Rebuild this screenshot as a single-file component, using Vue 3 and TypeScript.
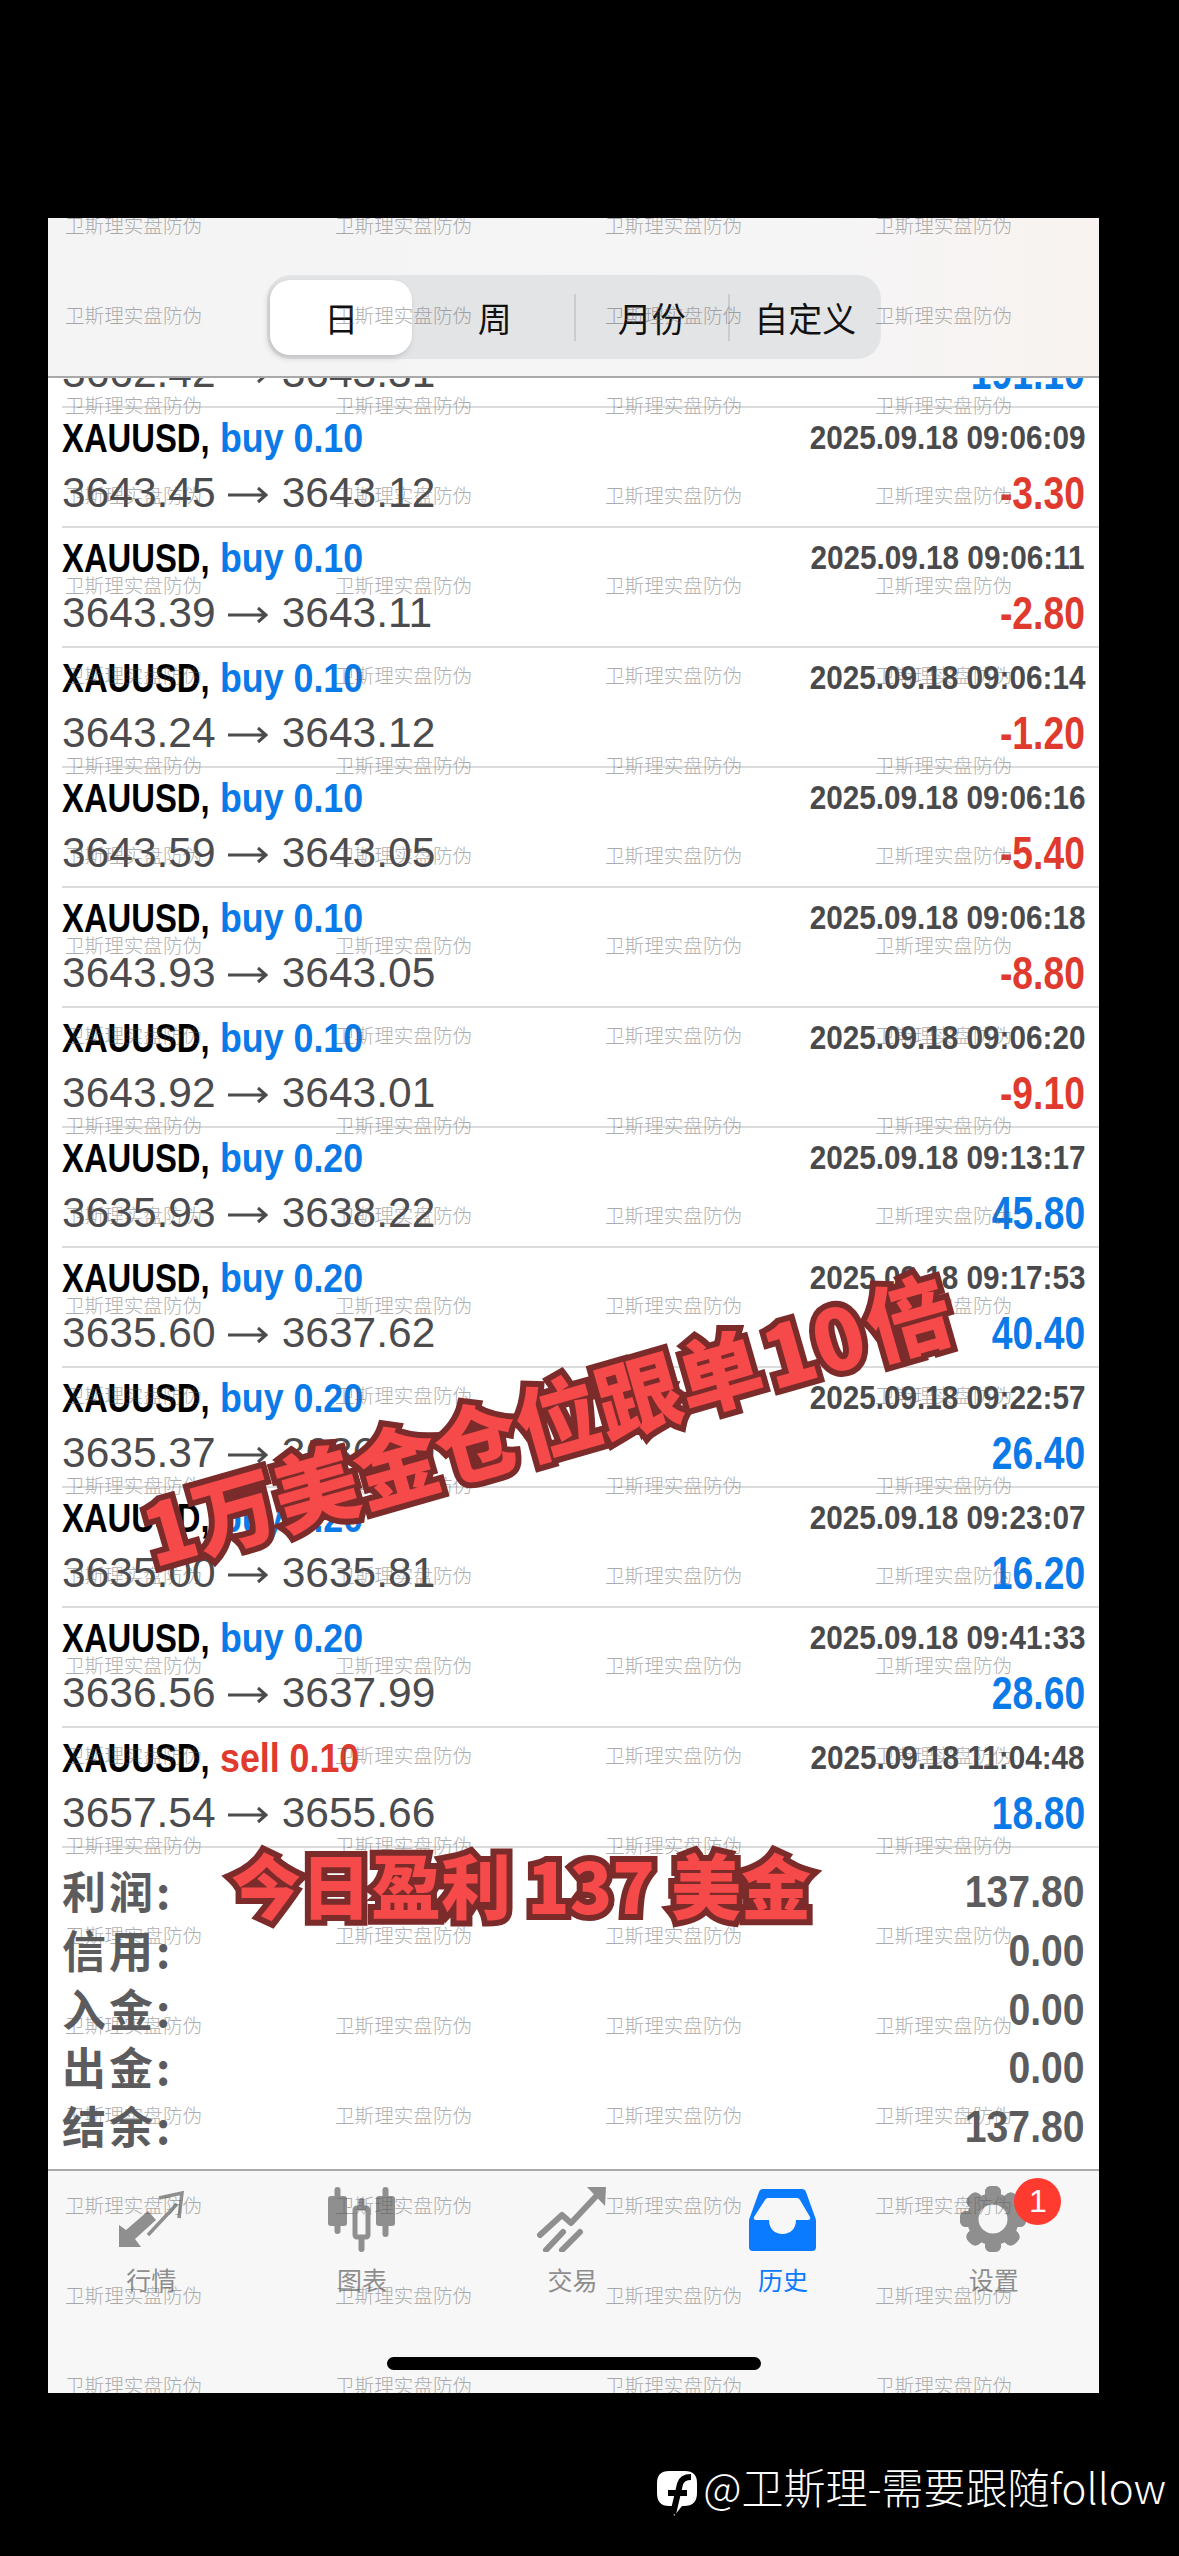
<script setup lang="ts">
interface Trade { side: string; lot: string; open: string; close: string; time: string; amount: string }

const trades: Trade[] = [
  { side: 'sell', lot: '0.10', open: '3662.42', close: '3643.31', time: '2025.09.18 08:59:02', amount: '191.10' },
  { side: 'buy', lot: '0.10', open: '3643.45', close: '3643.12', time: '2025.09.18 09:06:09', amount: '-3.30' },
  { side: 'buy', lot: '0.10', open: '3643.39', close: '3643.11', time: '2025.09.18 09:06:11', amount: '-2.80' },
  { side: 'buy', lot: '0.10', open: '3643.24', close: '3643.12', time: '2025.09.18 09:06:14', amount: '-1.20' },
  { side: 'buy', lot: '0.10', open: '3643.59', close: '3643.05', time: '2025.09.18 09:06:16', amount: '-5.40' },
  { side: 'buy', lot: '0.10', open: '3643.93', close: '3643.05', time: '2025.09.18 09:06:18', amount: '-8.80' },
  { side: 'buy', lot: '0.10', open: '3643.92', close: '3643.01', time: '2025.09.18 09:06:20', amount: '-9.10' },
  { side: 'buy', lot: '0.20', open: '3635.93', close: '3638.22', time: '2025.09.18 09:13:17', amount: '45.80' },
  { side: 'buy', lot: '0.20', open: '3635.60', close: '3637.62', time: '2025.09.18 09:17:53', amount: '40.40' },
  { side: 'buy', lot: '0.20', open: '3635.37', close: '3636.69', time: '2025.09.18 09:22:57', amount: '26.40' },
  { side: 'buy', lot: '0.20', open: '3635.00', close: '3635.81', time: '2025.09.18 09:23:07', amount: '16.20' },
  { side: 'buy', lot: '0.20', open: '3636.56', close: '3637.99', time: '2025.09.18 09:41:33', amount: '28.60' },
  { side: 'sell', lot: '0.10', open: '3657.54', close: '3655.66', time: '2025.09.18 11:04:48', amount: '18.80' },
]

const summary = [
  { label: '利润:', value: '137.80' },
  { label: '信用:', value: '0.00' },
  { label: '入金:', value: '0.00' },
  { label: '出金:', value: '0.00' },
  { label: '结余:', value: '137.80' },
]

const segments = ['日', '周', '月份', '自定义']
const gearTeeth = [0, 45, 90, 135, 180, 225, 270, 315]
const marks = Array.from({ length: 100 }, (_, i) => i)
</script>

<template>
  <div class="page">
    <div class="screen">
      <header class="head">
        <div class="seg">
          <div v-for="(s, i) in segments" :key="s" class="seg-item" :class="{ active: i === 0, divided: i > 1 }">
            <span class="seg-text">{{ s }}</span>
          </div>
        </div>
      </header>

      <main class="main">
        <div class="list">
          <div v-for="t in trades" :key="t.time" class="row">
            <div class="line one">
              <div class="title">
                <span class="sym">XAUUSD,</span>
                <span class="lot" :class="t.side">{{ t.side }} {{ t.lot }}</span>
              </div>
              <span class="time">{{ t.time }}</span>
            </div>
            <div class="line two">
              <span class="price">
                <span>{{ t.open }}</span>
                <svg class="arrow" viewBox="0 0 40 20" width="40" height="20">
                  <path fill="none" stroke="#4c4c4e" stroke-width="3" d="M0 10 H38 M30 3 L38 10 L30 17" />
                </svg>
                <span>{{ t.close }}</span>
              </span>
              <span class="amount" :class="t.amount.startsWith('-') ? 'neg' : 'pos'">{{ t.amount }}</span>
            </div>
          </div>
        </div>
        <div class="summary">
          <div v-for="s in summary" :key="s.label" class="sum-row">
            <span class="sum-label">{{ s.label }}</span>
            <span class="sum-value">{{ s.value }}</span>
          </div>
        </div>
      </main>

      <nav class="tabbar">
        <div class="tabs">
          <div class="tab">
            <svg class="icon" viewBox="0 0 80 66" width="80" height="66">
              <path fill="#8f8f8f" d="M8 39 L15 44 L37 25 L45 34 L24 53 L30 61 L8 61 Z" />
              <path fill="none" stroke="#8f8f8f" stroke-width="3.5" d="M37 49 L66 18 M48 12 L71 7 L68 32" />
            </svg>
            <span class="tab-label">行情</span>
          </div>
          <div class="tab">
            <svg class="icon" viewBox="0 0 80 66" width="80" height="66">
              <g fill="#8f8f8f">
                <rect x="12.5" y="1" width="6" height="47" rx="3" />
                <rect x="6" y="10" width="19" height="30" rx="3" />
                <rect x="60.5" y="1" width="6" height="50" rx="3" />
                <rect x="54" y="10" width="19" height="30" rx="3" />
                <rect x="36.5" y="12" width="6" height="54" rx="3" />
              </g>
              <rect x="33" y="22" width="13" height="29" rx="2" fill="#f7f7f7" stroke="#8f8f8f" stroke-width="5" />
            </svg>
            <span class="tab-label">图表</span>
          </div>
          <div class="tab">
            <svg class="icon" viewBox="0 0 80 66" width="80" height="66">
              <g fill="none" stroke="#8f8f8f" stroke-width="6" stroke-linecap="round" stroke-linejoin="round">
                <path d="M8 49 L30 29 L39 37 L69 5" />
                <path d="M14 64 L31 46 M30 64 L48 46" />
              </g>
              <path fill="#8f8f8f" d="M55 1 L74 1 L73 20 Z" />
            </svg>
            <span class="tab-label">交易</span>
          </div>
          <div class="tab">
            <svg class="icon" viewBox="0 0 80 66" width="80" height="66">
              <path fill="#0a7aff" d="M20 3 H59 Q62 3 63 6 L72 31 Q73 33 73 35 V61 Q73 65 69 65 H10 Q6 65 6 61 V35 Q6 33 7 31 L16 6 Q17 3 20 3 Z" />
              <path fill="#f7f7f7" d="M25 12 H54 Q56 12 57 14 L67 31 Q68 34 65 34 H53 C53 43 47 48 39.5 48 C32 48 26 43 26 34 H13 Q10 34 11 31 L22 14 Q23 12 25 12 Z" />
            </svg>
            <span class="tab-label current">历史</span>
          </div>
          <div class="tab">
            <svg class="icon" viewBox="0 0 80 66" width="80" height="66">
              <g fill="#8f8f8f">
                <rect v-for="a in gearTeeth" :key="a" x="31" y="0" width="16" height="66" rx="6" :transform="`rotate(${a} 39 33)`" />
              </g>
              <circle cx="39" cy="33" r="20" fill="none" stroke="#8f8f8f" stroke-width="12" />
              <circle cx="39" cy="33" r="14.5" fill="#f7f7f7" />
            </svg>
            <span class="tab-label">设置</span>
            <span class="badge">1</span>
          </div>
        </div>
        <div class="home"></div>
      </nav>

      <div class="marks">
        <span v-for="m in marks" :key="m" class="mark">卫斯理实盘防伪</span>
      </div>
      <div class="sticker big">1万美金仓位跟单 10 倍</div>
      <div class="sticker small">今日盈利 137 美金</div>
    </div>

    <footer class="foot">
      <svg class="fb" viewBox="0 0 40 46" width="40" height="46">
        <path fill="#fff" d="M12 1 H28 Q40 1 40 13 V23 Q40 36 27 36 H25 L17 46 L15 36 H12 Q0 36 0 23 V13 Q0 1 12 1 Z" />
        <path fill="none" stroke="#000" stroke-width="6" d="M16 44 L23 14 Q25 7 34 7 M11 23 H30" />
      </svg>
      <span class="foot-text">@卫斯理-需要跟随follow</span>
    </footer>
  </div>
</template>

<style>
html, body { margin: 0; background: #000; }
</style>

<style scoped>
.page {
  width: 1179px;
  height: 2556px;
  box-sizing: border-box;
  padding: 218px 0 0 48px;
  background: #000;
  display: flex;
  flex-direction: column;
  font-family: "Liberation Sans", "Noto Sans CJK SC", sans-serif;
  overflow: hidden;
}
.screen {
  position: relative;
  width: 1051px;
  height: 2175px;
  flex: none;
  overflow: hidden;
  background: #fff;
  display: flex;
  flex-direction: column;
}
.head {
  height: 160px;
  flex: none;
  box-sizing: border-box;
  border-bottom: 2px solid #a9a9a9;
  background: linear-gradient(90deg, #f4f4f5 0%, #f5f5f6 70%, #f8f3f0 100%);
  padding: 57px 0 0 219px;
}
.seg {
  width: 614px;
  height: 84px;
  border-radius: 24px;
  background: #e3e4e6;
  display: grid;
  grid-template-columns: repeat(4, 1fr);
  align-items: center;
}
.seg-item {
  position: relative;
  height: 47px;
  display: flex;
  align-items: center;
  justify-content: center;
  font: 400 34px/47px "Noto Sans CJK SC", sans-serif;
  color: #111;
}
.seg-text { position: relative; }
.seg-item:nth-child(-n+2) .seg-text { margin-right: 5px; }
.seg-item.divided { border-left: 2px solid #cbccce; box-sizing: border-box; }
.seg-item.active::before {
  content: "";
  position: absolute;
  left: 3px;
  top: -14px;
  width: 142px;
  height: 75px;
  border-radius: 20px;
  background: #fff;
  box-shadow: -2px 3px 6px rgba(0, 0, 0, 0.16);
}
.main {
  flex: 1;
  min-height: 0;
  display: flex;
  flex-direction: column;
  overflow: hidden;
}
.list { margin-top: -90px; padding-left: 14px; }
.row {
  height: 120px;
  box-sizing: border-box;
  border-bottom: 2px solid #dcdcdc;
  padding: 6px 14px 0 0;
}
.line {
  display: flex;
  justify-content: space-between;
  white-space: nowrap;
}
.one { height: 48px; line-height: 48px; }
.two { height: 50px; line-height: 50px; margin-top: 6px; }
.title { display: flex; }
.sym {
  display: inline-block;
  width: 158px;
  font-size: 41px;
  font-weight: 700;
  color: #000;
  transform: scaleX(0.8);
  transform-origin: left center;
}
.lot {
  display: inline-block;
  font-size: 41px;
  font-weight: 700;
  transform: scaleX(0.872);
  transform-origin: left center;
}
.lot.buy { color: #0a7ae8; }
.lot.sell { color: #e03a2e; }
.time {
  font-size: 33px;
  font-weight: 700;
  color: #4a4a4c;
  transform: scaleX(0.9);
  transform-origin: right center;
}
.price {
  display: flex;
  align-items: center;
  font-size: 42.5px;
  color: #4c4c4e;
}
.arrow { margin: 0 14px 0 12px; flex: none; position: relative; top: 2px; }
.amount {
  font-size: 46px;
  font-weight: 700;
  transform: scaleX(0.81);
  transform-origin: right center;
}
.amount.neg { color: #e03a2e; }
.amount.pos { color: #0a7ae8; }
.summary {
  flex: 1;
  padding: 13px 14px 0;
}
.sum-row {
  height: 58.7px;
  display: flex;
  align-items: center;
  justify-content: space-between;
  color: #5c5c5e;
}
.sum-label {
  font: 700 44px/58px "Noto Sans CJK SC", sans-serif;
  letter-spacing: 3px;
}
.sum-value {
  margin-top: 4px;
  font-size: 44px;
  font-weight: 700;
  transform: scaleX(0.89);
  transform-origin: right center;
}
.tabbar {
  height: 224px;
  flex: none;
  box-sizing: border-box;
  border-top: 2px solid #a9a9a9;
  background: #f7f7f7;
  padding: 15px 0 23px;
  display: flex;
  flex-direction: column;
}
.tabs { display: grid; grid-template-columns: repeat(5, 1fr); margin-left: -2px; }
.tab {
  position: relative;
  display: flex;
  flex-direction: column;
  align-items: center;
}
.icon { display: block; }
.tab-label {
  margin-top: 12px;
  font: 400 25px/30px "Noto Sans CJK SC", sans-serif;
  color: #8e8e8e;
}
.tab-label.current { color: #0a7aff; }
.badge {
  position: absolute;
  left: 126px;
  top: -8px;
  width: 47px;
  height: 47px;
  border-radius: 50%;
  background: #ff3b30;
  color: #fff;
  font-size: 32px;
  line-height: 47px;
  text-align: center;
}
.home {
  margin-top: auto;
  align-self: center;
  width: 374px;
  height: 13px;
  border-radius: 7px;
  background: #000;
}
.marks {
  position: absolute;
  left: 17px;
  top: -38px;
  display: grid;
  grid-template-columns: repeat(4, 270px);
  grid-auto-rows: 90px;
  pointer-events: none;
}
.mark {
  font: 200 19.6px/90px "Noto Sans CJK SC", sans-serif;
  color: rgba(90, 90, 90, 0.5);
  white-space: nowrap;
}
.sticker {
  position: absolute;
  font-family: "Noto Sans CJK SC", sans-serif;
  font-weight: 900;
  color: #f64a4a;
  -webkit-text-stroke: 12px #7c2b2b;
  paint-order: stroke fill;
  white-space: nowrap;
}
.big {
  left: 80px;
  top: 1145px;
  font-size: 84px;
  word-spacing: -14px;
  line-height: 110px;
  transform: rotate(-16deg);
}
.small {
  left: 183px;
  top: 1616px;
  font-size: 70px;
  line-height: 100px;
}
.foot {
  display: flex;
  justify-content: flex-end;
  align-items: flex-start;
  padding: 77px 13px 0 0;
  color: #fff;
}
.fb { margin: 0 6px 0 0; }
.foot-text {
  margin-top: -6px;
  font: 300 42px/44px "Noto Sans CJK SC", sans-serif;
  white-space: nowrap;
}
</style>
